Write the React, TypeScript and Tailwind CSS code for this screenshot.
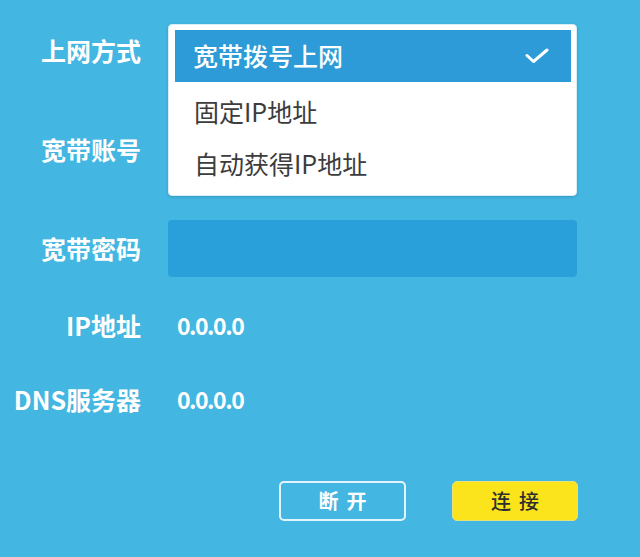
import React from 'react';

const font = { fontFamily: '"Noto Sans CJK SC", "Noto Sans", sans-serif' };

const options = [
  { id: 'pppoe', label: '宽带拨号上网', selected: true },
  { id: 'static', label: '固定IP地址', selected: false },
  { id: 'dhcp', label: '自动获得IP地址', selected: false },
];

const Label: React.FC<{ children: React.ReactNode }> = ({ children }) => (
  <div className="w-[141px] shrink-0 text-right text-[25px] font-bold leading-none text-white">
    {children}
  </div>
);

const CheckIcon = () => (
  <svg width="24" height="16" viewBox="0 0 24 16" fill="none">
    <path d="M2 7.5 L8.5 13.5 L22 2" stroke="white" strokeWidth="3" strokeLinecap="round" strokeLinejoin="round" />
  </svg>
);

export default function App() {
  return (
    <div className="w-[640px] h-[557px] overflow-hidden bg-[#43b6e1] pt-[22px]" style={font}>
      {/* 上网方式 */}
      <div className="flex h-[56px] items-center gap-[27px]">
        <Label>上网方式</Label>
        <div className="relative h-full w-[409px]">
          <div className="absolute left-0 top-[2px] z-10 w-[409px] rounded-[4px] border border-[#d6eef8] bg-white pb-[5px] pl-[6px] pr-[5px] pt-[5px] shadow-[0_1px_3px_rgba(0,0,0,0.15)]">
            {options.map((opt) =>
              opt.selected ? (
                <div
                  key={opt.id}
                  className="mb-[4px] flex h-[52px] items-center justify-between bg-[#2c9bd7] pl-[18px] pr-[22px] text-[25px] font-medium text-white"
                >
                  <span>{opt.label}</span>
                  <CheckIcon />
                </div>
              ) : (
                <div key={opt.id} className="flex h-[52px] items-center pl-[19px] text-[25px] text-[#3c3c3c]">
                  {opt.label}
                </div>
              )
            )}
          </div>
        </div>
      </div>

      {/* 宽带账号 */}
      <div className="mt-[43px] flex h-[56px] items-center gap-[27px]">
        <Label>宽带账号</Label>
        <div className="h-full w-[409px] rounded-[4px] bg-[#2aa0da]" />
      </div>

      {/* 宽带密码 */}
      <div className="mt-[43px] flex h-[57px] items-center gap-[27px]">
        <Label>宽带密码</Label>
        <div className="h-full w-[409px] rounded-[4px] bg-[#2aa0da]" />
      </div>

      <div className="mt-[33px] flex h-[30px] items-center gap-[36px]">
        <Label>IP地址</Label>
        <span className="text-[23px] font-bold tracking-[-1.5px] text-white">0.0.0.0</span>
      </div>

      <div className="mt-[44px] flex h-[30px] items-center gap-[36px]">
        <Label>DNS服务器</Label>
        <span className="text-[23px] font-bold tracking-[-1.5px] text-white">0.0.0.0</span>
      </div>

      <div className="mt-[67px] ml-[168px] flex w-[410px] justify-end gap-[46px]">
        <button className="flex h-[40px] w-[127px] items-center justify-center rounded-[5px] border-2 border-[#e2f5fc] text-[20px] font-bold tracking-[8px] text-white">
          <span className="ml-[8px]">断开</span>
        </button>
        <button className="flex h-[40px] w-[126px] items-center justify-center rounded-[5px] border border-[#e6e27a] bg-[#fbe41c] text-[20px] font-medium tracking-[8px] text-[#2e2e2e]">
          <span className="ml-[8px]">连接</span>
        </button>
      </div>
    </div>
  );
}
